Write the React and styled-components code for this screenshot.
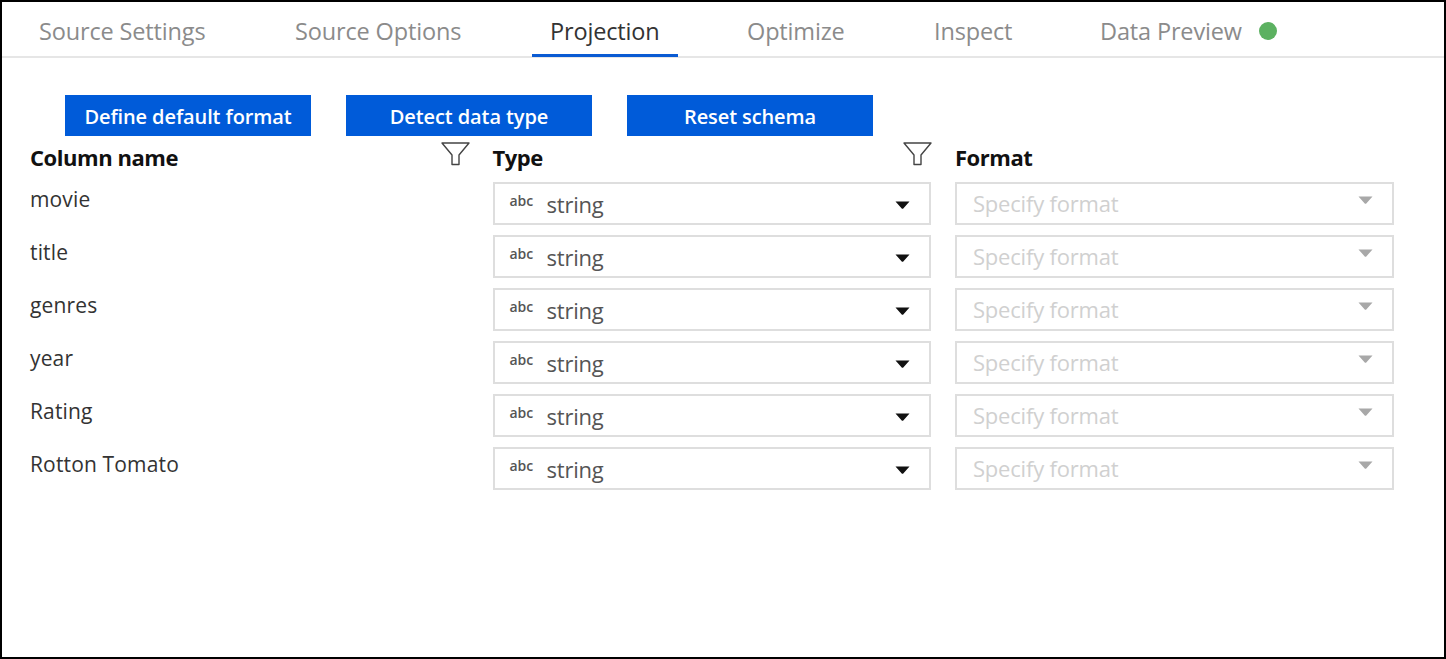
import React from 'react';
import styled, { createGlobalStyle } from 'styled-components';

const Global = createGlobalStyle`
  html, body { margin: 0; padding: 0; background: #fff; }
  body { font-family: "Open Sans", "Noto Sans", "Liberation Sans", sans-serif; }
  * { box-sizing: border-box; }
`;

const Frame = styled.div`
  width: 1446px;
  height: 659px;
  border: 2px solid #000;
  background: #fff;
  overflow: hidden;
`;

const TabBar = styled.div`
  display: flex;
  height: 56px;
  padding: 0 0 0 19px;
  border-bottom: 2px solid #e6e6e6;
`;

const Tab = styled.div`
  display: flex;
  align-items: center;
  gap: 17px;
  width: ${p => p.$w}px;
  margin-right: ${p => p.$mr}px;
  height: 55px;
  padding: 5px 0 0 18px;
  font-size: 23.5px;
  white-space: nowrap;
  letter-spacing: -0.15px;
  color: ${p => (p.$active ? '#333' : '#8b8b8b')};
  border-bottom: 3px solid ${p => (p.$active ? '#0a5bd3' : 'transparent')};
`;

const Dot = styled.span`
  width: 18px;
  height: 18px;
  border-radius: 50%;
  background: #5cb161;
`;

const Toolbar = styled.div`
  display: flex;
  gap: 35px;
  padding: 37px 0 0 63px;
`;

const ActionButton = styled.button`
  width: 246px;
  height: 41px;
  border: none;
  padding: 1px 0 0;
  background: #005bd9;
  color: #fff;
  font-family: inherit;
  font-size: 20px;
  font-weight: 600;
  letter-spacing: -0.1px;
`;

const Table = styled.div`
  display: grid;
  grid-template-columns: repeat(3, 438.5px);
  column-gap: 24px;
  padding: 1px 0 0 28px;
`;

const HeaderCell = styled.div`
  height: 45px;
  display: flex;
  justify-content: space-between;
  align-items: flex-start;
  font-size: 22px;
  font-weight: 700;
  letter-spacing: -0.45px;
  color: #111;
  line-height: 28px;
  padding-top: 6px;
`;

const FilterIcon = styled.svg`
  width: 29px;
  height: 25px;
  margin: -2px -1px 0 0;
  fill: none;
  stroke: #444;
  stroke-width: 1.4;
`;

const NameCell = styled.div`
  height: 53px;
  font-size: 21px;
  letter-spacing: 0.15px;
  color: #333;
  line-height: 34px;
`;

const SelectBox = styled.div`
  width: 100%;
  height: 43px;
  margin-bottom: 10px;
  border: 2px solid #dedede;
  display: flex;
  align-items: center;
  padding: 0 19px 0 15px;
`;

const TypeTag = styled.span`
  font-size: 14px;
  font-weight: 600;
  color: #555;
  width: 37px;
  margin-top: -6px;
`;

const SelectValue = styled.span`
  flex: 1;
  font-size: 22px;
  letter-spacing: -0.2px;
  color: #555;
  margin-top: 1px;
`;

const Placeholder = styled(SelectValue)`
  color: #d0d0d0;
  margin-top: -2px;
  padding-left: 1px;
`;

const Caret = styled.svg`
  width: 15px;
  height: 8px;
  fill: ${p => p.$muted ? '#a8a8a8' : '#111'};
  margin-top: ${p => p.$muted ? '-7px' : '2px'};
`;

const tabs = [
  { label: 'Source Settings', w: 203, mr: 53 },
  { label: 'Source Options', w: 202, mr: 53 },
  { label: 'Projection', w: 146, mr: 51, active: true },
  { label: 'Optimize', w: 134, mr: 53 },
  { label: 'Inspect', w: 113, mr: 53 },
  { label: 'Data Preview', w: 220, mr: 0, dot: true },
];

const columns = ['movie', 'title', 'genres', 'year', 'Rating', 'Rotton Tomato'];

const Filter = () => (
  <FilterIcon viewBox="0 0 29 25">
    <path d="M1 2h27L18 14v9.500h-7V14z" strokeLinejoin="round" />
  </FilterIcon>
);

const CaretIcon = ({ muted }) => (
  <Caret $muted={muted} viewBox="0 0 15 8">
    <path d="M0.500 0.500h14L8.500 7.200a1.300 1.300 0 0 1-2 0z" />
  </Caret>
);

export default function App() {
  return (
    <Frame>
      <Global />
      <TabBar>
        {tabs.map(t => (
          <Tab key={t.label} $w={t.w} $mr={t.mr} $active={t.active}>
            {t.label}
            {t.dot && <Dot />}
          </Tab>
        ))}
      </TabBar>
      <Toolbar>
        <ActionButton>Define default format</ActionButton>
        <ActionButton>Detect data type</ActionButton>
        <ActionButton>Reset schema</ActionButton>
      </Toolbar>
      <Table>
        <HeaderCell>Column name<Filter /></HeaderCell>
        <HeaderCell>Type<Filter /></HeaderCell>
        <HeaderCell>Format</HeaderCell>
        {columns.map(name => (
          <React.Fragment key={name}>
            <NameCell>{name}</NameCell>
            <SelectBox>
              <TypeTag>abc</TypeTag>
              <SelectValue>string</SelectValue>
              <CaretIcon />
            </SelectBox>
            <SelectBox>
              <Placeholder>Specify format</Placeholder>
              <CaretIcon muted />
            </SelectBox>
          </React.Fragment>
        ))}
      </Table>
    </Frame>
  );
}
